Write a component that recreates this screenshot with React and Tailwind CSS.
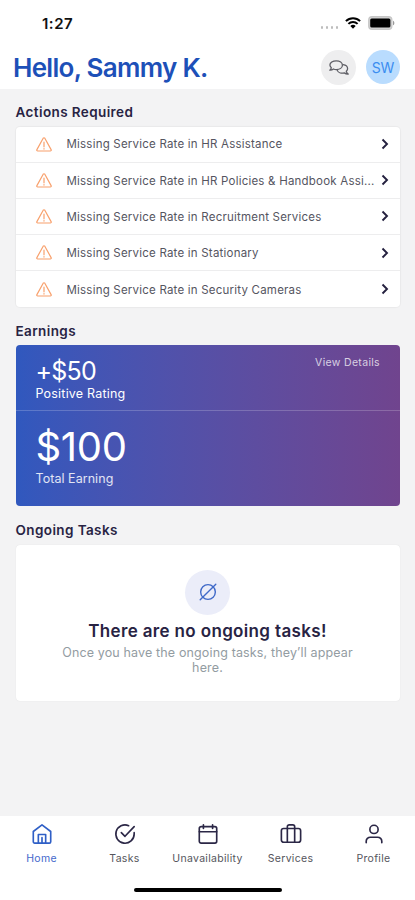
import React from 'react';

const actions = [
  'Missing Service Rate in HR Assistance',
  'Missing Service Rate in HR Policies & Handbook Assi...',
  'Missing Service Rate in Recruitment Services',
  'Missing Service Rate in Stationary',
  'Missing Service Rate in Security Cameras',
];

function Svg({ children, className, width = 1.8 }) {
  return (
    <svg viewBox="0 0 24 24" fill="none" stroke="currentColor" strokeWidth={width} strokeLinecap="round" strokeLinejoin="round" className={className}>
      {children}
    </svg>
  );
}

function StatusBar() {
  return (
    <div className="flex h-[46px] items-center justify-between pl-[42px] pr-[20px]">
      <span className="text-[15px] font-semibold leading-none tracking-[0.5px] text-[#111]">1:27</span>
      <div className="flex items-center">
        <div className="mr-[7px] mt-[8px] flex gap-[2.5px]">
          {[0, 1, 2, 3].map((i) => (
            <span key={i} className="h-[3px] w-[2.5px] rounded-full bg-[#bdbdbd]" />
          ))}
        </div>
        <svg viewBox="0 0 16 12" className="mr-[7px] h-[12px] w-[16px]" fill="none" stroke="#000" strokeWidth="2">
          <path d="M.9 4.1a10.2 10.2 0 0 1 14.2 0" />
          <path d="M3.4 6.9a6.6 6.6 0 0 1 9.2 0" />
          <path d="M5.3 9 8 11.8 10.700 9a3.900 3.900 0 0 0-5.400 0z" fill="#000" stroke="none" />
        </svg>
        <svg viewBox="0 0 27 14" className="h-[14px] w-[27px]">
          <rect x=".7" y=".7" width="23.200" height="12.600" rx="3.400" fill="#d2d2d2" stroke="#c6c6c6" strokeWidth="1.200" />
          <rect x="2.200" y="2.400" width="20.200" height="9.200" rx="1.500" fill="#000" />
          <path d="M25 4.700v4.600c1.800-.7 1.800-3.900 0-4.600z" fill="#999" />
        </svg>
      </div>
    </div>
  );
}

function Header() {
  return (
    <header className="h-[89px] bg-white">
      <StatusBar />
      <div className="flex h-[42px] items-center pl-[13px] pr-[15px]">
        <h1 className="flex-1 pt-px text-[26px] font-semibold leading-none tracking-[-0.700px] text-[#1d50b8]">Hello, Sammy K.</h1>
        <div className="mr-[10px] flex size-[35px] items-center justify-center rounded-full bg-[#eeeeef]">
          <svg viewBox="0 0 20 15" className="h-[15px] w-[20px]" fill="none" stroke="#5f5f66" strokeWidth="1.300" strokeLinejoin="round" strokeLinecap="round">
            <path d="M7.300.8c3.500 0 6.100 1.900 6.100 4.400s-2.600 4.400-6.100 4.400c-1 0-2-.2-2.800-.6-1 .8-2.300 1.300-3.700 1.200.9-.8 1.400-1.600 1.500-2.500C1.500 7 .9 6.200.9 5.100.9 2.700 3.700.8 7.300.8z" />
            <path d="M14.100 4.700c2.600.3 4.500 2 4.500 4.100 0 1-.5 1.800-1.300 2.500.2 1 .8 1.900 1.900 2.700-1.500.1-2.900-.4-3.900-1.100-3.200.7-6.300-.5-7.100-2.800" />
          </svg>
        </div>
        <div className="flex size-[34px] items-center justify-center rounded-full bg-[#b9dcfe] text-[14px] tracking-[-0.2px] text-[#3b8df0]">SW</div>
      </div>
    </header>
  );
}

function ActionRow({ label }) {
  return (
    <li className="flex h-[36.200px] items-center border-b border-[#ededee] pl-[20px] pr-[11px] last:border-b-0">
      <svg viewBox="0 0 16 15" className="h-[15px] w-[16px] shrink-0" fill="none" stroke="#f8a06c" strokeWidth="1.200" strokeLinejoin="round" strokeLinecap="round">
        <path d="M7.200 1.200c.4-.6 1.200-.6 1.600 0l6.300 11.400c.4.700 0 1.400-.8 1.400H1.700c-.8 0-1.200-.7-.8-1.400z" />
        <path d="M8 5.200v4.600M8 11.600v.5" />
      </svg>
      <span className="ml-[15px] whitespace-nowrap pt-[2px] text-[11.500px] tracking-[0.210px] text-[#55555f]">{label}</span>
      <svg viewBox="0 0 8 12" className="ml-auto h-[12px] w-[8px] shrink-0" fill="none" stroke="#24203f" strokeWidth="1.900">
        <path d="m1.500 1.500 4.500 4.500-4.500 4.500" />
      </svg>
    </li>
  );
}

function SectionTitle({ children }) {
  return <h2 className="flex items-center text-[13.500px] font-semibold leading-[18px] tracking-[0.400px] text-[#282343]">{children}</h2>;
}

function Earnings() {
  return (
    <div className="mt-[5px] h-[161px] rounded-[4px] bg-gradient-to-r from-[#3058be] to-[#70448e] text-white">
      <div className="flex h-[66.500px] justify-between border-b border-white/20 pl-[20px] pr-[19.500px]">
        <div>
          <div className="mt-[12px] text-[25px] leading-[28px] tracking-[-0.800px]">+$50</div>
          <div className="text-[12.500px] leading-[17px] tracking-[0.200px]">Positive Rating</div>
        </div>
        <span className="mt-[10px] text-[10.500px] leading-[16px] tracking-[0.330px] text-white/75">View Details</span>
      </div>
      <div className="pl-[20px]">
        <div className="pt-[13.500px] text-[40px] leading-[44px] tracking-[-0.300px]">$100</div>
        <div className="pt-[1px] text-[12.500px] leading-[18px] tracking-[0.050px] text-white/85">Total Earning</div>
      </div>
    </div>
  );
}

function EmptyTasks() {
  return (
    <div className="mt-[6px] flex h-[156px] flex-col items-center rounded-[4px] bg-white pt-[25px] shadow-[0_0_1px_rgba(0,0,0,0.12)]">
      <div className="flex size-[45px] shrink-0 items-center justify-center rounded-full bg-[#ebedf9] text-[#3f69c8]">
        <Svg className="size-[22px]" width={1.500}>
          <circle cx="12" cy="12" r="8" />
          <path d="M3.500 20.500 20.500 3.500" />
        </Svg>
      </div>
      <h3 className="mt-[4px] text-[17px] font-semibold leading-[24px] tracking-[0.350px] text-[#282343]">There are no ongoing tasks!</h3>
      <p className="mt-[2px] w-[310px] text-center text-[12.500px] leading-[15px] tracking-[0.140px] text-[#939ca2]">
        Once you have the ongoing tasks, they’ll appear<br />here.
      </p>
    </div>
  );
}

const tabs = [
  { label: 'Home', icon: <><path d="M2.500 9.300 12 2l9.500 7.300V20.500a1.500 1.500 0 0 1-1.500 1.500H4a1.500 1.500 0 0 1-1.500-1.500z" /><path d="M8 22v-9.500h8V22M12 16v6" /></> },
  { label: 'Tasks', icon: <><path d="M22 10.500V12a10 10 0 1 1-6-9.100" /><path d="m8 10.500 4 4L22 4" /></> },
  { label: 'Unavailability', icon: <><rect x="2.500" y="4" width="19" height="18" rx="2" /><path d="M7 2v4M17 2v4M2.500 9.500h19" /></> },
  { label: 'Services', icon: <><rect x="1.500" y="6" width="21" height="15" rx="2.500" /><path d="M8 6V4a2 2 0 0 1 2-2h4a2 2 0 0 1 2 2v2M8 6v15M16 6v15" /></> },
  { label: 'Profile', icon: <><circle cx="12" cy="7" r="4.500" /><path d="M3.500 21.500V20a4.500 4.500 0 0 1 4.500-4.500h8a4.500 4.500 0 0 1 4.500 4.500v1.500" /></> },
];

function TabBar() {
  return (
    <nav className="flex h-[84px] flex-col bg-white">
      <div className="grid flex-1 grid-cols-5">
        {tabs.map((tab) => (
          <div key={tab.label} className={tab.label === 'Home' ? 'flex flex-col items-center pt-[7px] text-[#2f5fc6]' : 'flex flex-col items-center pt-[7px] text-[#2b2746]'}>
            <Svg className="size-[22px]">{tab.icon}</Svg>
            <span className={tab.label === 'Home' ? 'mt-[7px] text-[10.500px] leading-[14px] tracking-[0.300px] text-[#4468cc]' : 'mt-[7px] text-[10.500px] leading-[14px] tracking-[0.300px] text-[#55555c]'}>{tab.label}</span>
          </div>
        ))}
      </div>
      <div className="mx-auto mb-[8px] h-[4px] w-[148px] rounded-full bg-black" />
    </nav>
  );
}

export default function App() {
  return (
    <div className="flex h-[900px] w-[415px] flex-col overflow-hidden bg-[#f3f3f4] font-['Inter',sans-serif]">
      <Header />
      <main className="flex-1 px-[15.500px] pt-[14px]">
        <SectionTitle>Actions Required</SectionTitle>
        <ul className="mt-[5.500px] rounded-[4px] bg-white shadow-[0_0_1px_1px_rgba(0,0,0,0.040)]">
          {actions.map((a) => <ActionRow key={a} label={a} />)}
        </ul>
        <div className="h-[14.500px]" />
        <SectionTitle>Earnings</SectionTitle>
        <Earnings />
        <div className="h-[15px]" />
        <SectionTitle>Ongoing Tasks</SectionTitle>
        <EmptyTasks />
      </main>
      <TabBar />
    </div>
  );
}
